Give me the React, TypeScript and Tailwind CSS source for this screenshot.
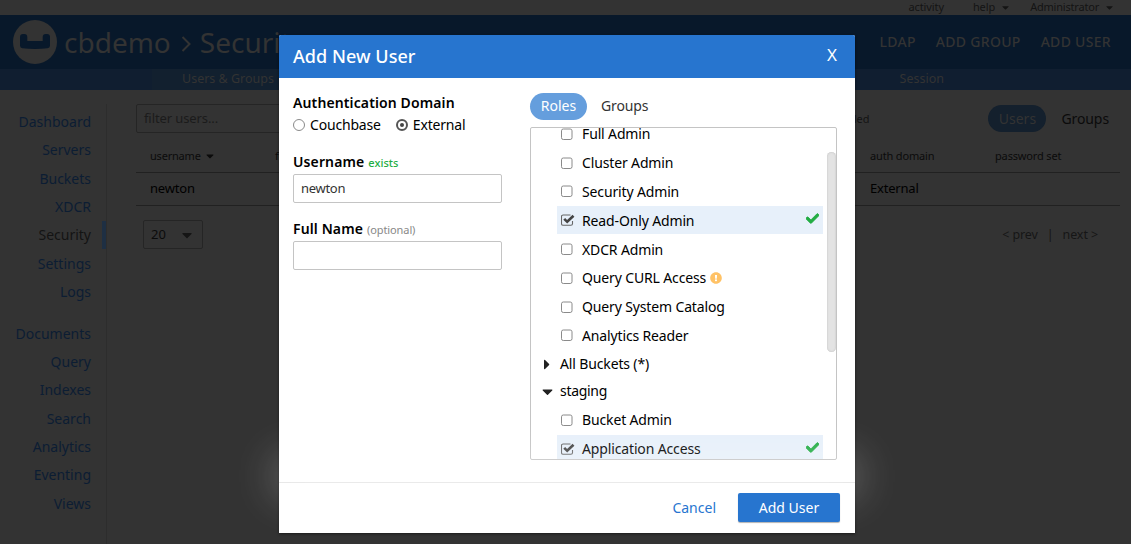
import React from "react";
import { FaCheck, FaExclamationCircle, FaCaretDown, FaCaretRight } from "react-icons/fa";

const primaryNav = ["Dashboard", "Servers", "Buckets", "XDCR", "Security", "Settings", "Logs"];
const secondaryNav = ["Documents", "Query", "Indexes", "Search", "Analytics", "Eventing", "Views"];

type Role = { name: string; checked?: boolean; warn?: boolean };

const adminRoles: Role[] = [
  { name: "Full Admin" },
  { name: "Cluster Admin" },
  { name: "Security Admin" },
  { name: "Read-Only Admin", checked: true },
  { name: "XDCR Admin" },
  { name: "Query CURL Access", warn: true },
  { name: "Query System Catalog" },
  { name: "Analytics Reader" },
];

const stagingRoles: Role[] = [{ name: "Bucket Admin" }, { name: "Application Access", checked: true }];

function CheckBox({ checked }: { checked?: boolean }) {
  return (
    <svg width="14" height="14" viewBox="0 0 14 14" className="shrink-0" fill="none">
      {checked ? (
        <>
          <path d="M11.500 8v2.700a1.600 1.600 0 0 1-1.600 1.600H2.100A1.600 1.600 0 0 1 .5 10.700V3.600A1.600 1.600 0 0 1 2.100 2h7.400" stroke="#666" strokeWidth="1.1" />
          <path d="M3.200 5.800l3 3 6.300-6.100" stroke="#444" strokeWidth="2.600" />
        </>
      ) : (
        <rect x="0.500" y="2" width="10.500" height="10.500" rx="1.800" stroke="#8a8a8a" />
      )}
    </svg>
  );
}

function RoleRow({ role }: { role: Role }) {
  return (
    <div className={`mb-[0.8px] ml-[26px] flex h-7 w-[266px] shrink-0 items-center pl-1 ${role.checked ? "bg-[#e7f0fa]" : ""}`}>
      <CheckBox checked={role.checked} />
      <span className="ml-[7px] pt-[1px] text-sm tracking-[-0.14px] text-black">{role.name}</span>
      {role.warn && <FaExclamationCircle className="ml-1 text-[12px] text-[#ffc266]" />}
      {role.checked && <FaCheck className="mr-1 mb-[3px] ml-auto text-[13px] text-[#23ad44]" stroke="#23ad44" strokeWidth="36" />}
    </div>
  );
}

function NavGroup({ items, className }: { items: string[]; className: string }) {
  return (
    <ul className={className}>
      {items.map((item) => (
        <li
          key={item}
          className={`flex h-[28.3px] items-center justify-end border-r-4 pr-[11px] ${
            item === "Security" ? "border-[#1e2f43] text-[#141414]" : "border-transparent"
          }`}
        >
          {item}
        </li>
      ))}
    </ul>
  );
}

function Page() {
  return (
    <div className="flex h-full flex-col">
      <div className="flex h-[15px] items-center justify-end pr-[18px] text-[11px] text-[#141414]">
        <span className="tracking-[-0.1px]">activity</span>
        <span className="ml-[29px] flex items-center gap-[7px] tracking-[-0.1px]">help <FaCaretDown className="w-[7px] text-[11px]" /></span>
        <span className="ml-[21px] flex items-center gap-[7px] tracking-[-0.2px]">Administrator <FaCaretDown className="w-[7px] text-[11px]" /></span>
      </div>
      <header className="flex h-[54px] shrink-0 items-center bg-[#08182a] pr-5 pl-[13px] text-[#333]">
        <svg width="44" height="44" viewBox="0 0 44 44" className="shrink-0">
          <circle cx="22" cy="22" r="22" fill="#333" />
          <path d="M7 17q0-3 3-3h1.300q3 0 3 3v4h15.400v-4q0-3 3-3H34q3 0 3 3v8.500q0 2.500-2.500 2.800Q22 29.800 9.500 28.300 7 28 7 25.500z" fill="#08182a" />
        </svg>
        <h1 className="ml-[7px] flex items-center text-[28px]">
          <span>cbdemo</span>
          <svg width="10" height="16" viewBox="0 0 10 16" className="mt-[3px] mr-[9px] ml-[10px]" fill="none" stroke="#333" strokeWidth="2">
            <path d="M1.500 1l7 7-7 7" />
          </svg>
          <span>Security</span>
        </h1>
        <div className="ml-auto flex gap-5 text-sm font-medium tracking-[0.3px]">
          <span>LDAP</span>
          <span>ADD GROUP</span>
          <span>ADD USER</span>
        </div>
      </header>
      <nav className="flex h-[21px] shrink-0 items-center bg-[#101e30] text-[12.5px] text-[#333]">
        <span className="ml-[152px] flex h-full w-[152px] items-center bg-[#12202f] pl-[30px]">Users &amp; Groups</span>
        <span className="mr-[187px] ml-auto">Session</span>
      </nav>
      <div className="flex min-h-0 flex-1 pt-[14px]">
        <aside className="w-[107px] border-r border-[#2d2d2d] pt-1 text-sm text-[#0c1d33]">
          <NavGroup items={primaryNav} className="" />
          <NavGroup items={secondaryNav} className="mt-[13.5px]" />
        </aside>
        <main className="ml-[29px] flex w-[984px] flex-col">
          <div className="flex h-[29px] items-center">
            <div className="flex h-[29px] w-[210px] items-center rounded-xs border border-[#252525] pl-[7px] text-[13px] tracking-[-0.1px] text-[#1b1b1b]">
              filter users...
            </div>
            <span className="ml-auto w-[80px] pt-[2px] text-right text-[11px] text-[#141414]">disabled</span>
            <div className="ml-[119px] flex items-center text-sm">
              <span className="flex h-[27px] w-[58px] items-center justify-center rounded-full bg-[#14202d] text-[#333]">Users</span>
              <span className="mr-[11px] ml-[15px] tracking-[-0.1px] text-[#0b0b0b]">Groups</span>
            </div>
          </div>
          <div className="flex h-10 items-center border-b border-[#212121] pt-[7px] text-[11px] text-[#0b0b0b]">
            <span className="ml-[14px] flex w-[125px] items-center gap-[3px] tracking-[-0.2px]">username <FaCaretDown className="text-[12px]" /></span>
            <span className="w-[595px]">full name</span>
            <span className="w-[125px] tracking-[-0.15px]">auth domain</span>
            <span className="tracking-[-0.15px]">password set</span>
          </div>
          <div className="flex h-[33px] items-center border-b border-[#212121] text-[13px] tracking-[-0.2px] text-black">
            <span className="ml-[14px] w-[720px]">newton</span>
            <span>External</span>
          </div>
          <div className="mt-[14px] flex h-[29px] items-center justify-between">
            <div className="ml-[7px] flex h-full w-[60px] items-center justify-between rounded-xs border border-[#252525] pr-[7px] pl-[7px] text-[13px] text-[#0b0b0b]">
              20 <FaCaretDown className="text-[16px] text-[#151515]" />
            </div>
            <div className="mr-[22px] flex gap-[9px] pt-[2px] text-[12.5px] tracking-[-0.1px] text-[#161616]">
              <span>&lt; prev</span><span>|</span><span>next &gt;</span>
            </div>
          </div>
        </main>
      </div>
    </div>
  );
}

function Modal() {
  return (
    <div className="absolute top-[35px] left-[279px] flex h-[498px] w-[576px] flex-col rounded-t-xs bg-white shadow-[0_1px_3px_rgba(0,0,0,0.5)]">
      <div className="flex h-[43px] shrink-0 items-center justify-between rounded-t-xs bg-[#2775cf] pr-[18px] pl-[14px] text-white">
        <h2 className="text-[18px] font-medium tracking-[0.05px]">Add New User</h2>
        <button className="mb-1 text-[17px] leading-none">X</button>
      </div>
      <div className="flex h-[404px] shrink-0 pl-[14px] text-sm text-black">
        <div className="flex w-[209px] flex-col pt-[15px]">
          <label className="h-5 font-semibold leading-5 tracking-[0.12px]">Authentication Domain</label>
          <div className="flex h-6 items-center tracking-[-0.18px]">
            <span className="h-3 w-3 rounded-full border border-[#8a8a8a]" />
            <span className="ml-[5px]">Couchbase</span>
            <span className="ml-[15px] flex h-3 w-3 items-center justify-center rounded-full border-2 border-[#555]">
              <span className="h-1 w-1 rounded-full bg-[#444]" />
            </span>
            <span className="ml-[5px]">External</span>
          </div>
          <div className="mt-[14px] flex h-[23px] items-baseline">
            <label className="font-semibold leading-[22px] tracking-[0.12px]">Username</label>
            <span className="ml-1 text-[11px] font-medium text-[#23ad44]">exists</span>
          </div>
          <div className="flex h-[29px] items-center rounded-xs border border-[#c4c4c4] pl-[7px] text-[13px] tracking-[-0.3px] text-[#333]">newton</div>
          <div className="mt-[15px] flex h-[23px] items-baseline">
            <label className="font-semibold leading-[22px] tracking-[0.12px]">Full Name</label>
            <span className="ml-1 text-[11px] tracking-[-0.1px] text-[#888]">(optional)</span>
          </div>
          <div className="h-[29px] rounded-xs border border-[#c4c4c4]" />
        </div>
        <div className="ml-7 flex w-[307px] flex-col pt-[15px]">
          <div className="flex h-[27px] items-center">
            <span className="flex h-[27px] w-[57px] items-center justify-center rounded-full bg-[#659edd] pb-[2px] text-white">Roles</span>
            <span className="ml-[14px] pb-[2px] tracking-[-0.15px] text-[#333]">Groups</span>
          </div>
          <div className="relative mt-[7px] flex h-[333px] flex-col overflow-hidden rounded-xs border border-[#c4c4c4]">
            <div className="-mt-[8.2px] flex shrink-0 flex-col">
              {adminRoles.map((r) => <RoleRow key={r.name} role={r} />)}
            </div>
            <div className="flex h-7 shrink-0 items-center pl-[13px]">
              <FaCaretRight className="w-[6px] text-[17px] text-[#222]" />
              <span className="ml-[10px] tracking-[-0.14px]">All Buckets (*)</span>
            </div>
            <div className="mb-[0.6px] flex h-[27px] shrink-0 items-center pl-[10px]">
              <FaCaretDown className="w-[13px] text-[17px] text-[#222]" />
              <span className="ml-[6px] pb-px tracking-[-0.3px]">staging</span>
            </div>
            {stagingRoles.map((r) => <RoleRow key={r.name} role={r} />)}
            <div className="absolute top-6 right-0 h-[200px] w-[9px] rounded-full bg-[#e3e3e3] shadow-[inset_0_0_2px_#bbb]" />
          </div>
        </div>
      </div>
      <div className="relative flex h-[51px] shrink-0 items-center justify-end border-t border-[#e5e5e5] bg-white pr-[15px] text-sm">
        <div className="pointer-events-none absolute -top-[8px] right-[14px] left-[14px] h-[2px] shadow-[0_0_44px_14px_rgba(255,255,255,0.42)]" />
        <button className="relative text-[#2775cf]">Cancel</button>
        <button className="relative mb-px ml-[22px] h-[29px] w-[102px] rounded-xs bg-[#2775cf] pt-px text-white shadow-[0_1px_1px_rgba(0,0,0,0.3)]">Add User</button>
      </div>
    </div>
  );
}

export default function App() {
  return (
    <div className="relative h-[544px] w-[1131px] overflow-hidden bg-[#333] font-['Noto_Sans','Open_Sans',sans-serif]">
      <Page />
      <Modal />
    </div>
  );
}
